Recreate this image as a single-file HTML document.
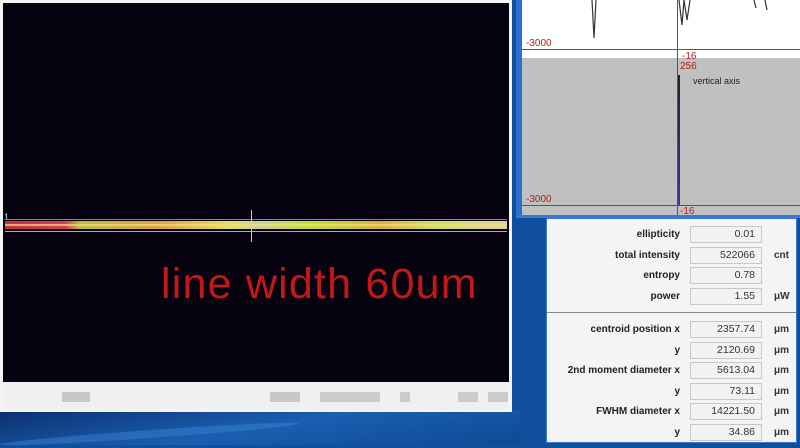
<!DOCTYPE html>
<html><head><meta charset="utf-8"><style>
*{margin:0;padding:0;box-sizing:border-box}
body{width:800px;height:445px;overflow:hidden;position:relative;background:#0f4f9c;font-family:"Liberation Sans",sans-serif}
.abs{position:absolute}
.lbl{position:absolute;right:116px;font-size:10px;font-weight:bold;color:#222;text-align:right;white-space:nowrap}
.box{position:absolute;left:143px;width:72px;height:17px;background:#f2f2f2;border:1px solid #c8c8c8;font-size:10.5px;color:#333;text-align:right;padding-right:6px;line-height:15px}
.u{position:absolute;left:227px;font-size:10px;font-weight:bold;color:#333}
.rt{color:#b02020;font-size:10px;position:absolute}
</style></head><body>
<div class="abs" style="left:0;top:410px;width:520px;height:35px;background:linear-gradient(170deg,#0b2f6e 0%,#1a5fb0 50%,#0e4a95 100%)"></div>
<div class="abs" style="left:0;top:430px;width:300px;height:8px;background:#3b7fd0;opacity:.5;border-radius:50%;transform:rotate(-4deg)"></div>
<div class="abs" style="left:0;top:0;width:512px;height:412px;background:#f4f4f4"></div>
<div class="abs" style="left:3px;top:3px;width:506px;height:379px;background:#06020f"></div>
<div class="abs" style="left:3px;top:382px;width:506px;height:28px;background:#f0f0f0"></div>
<div class="abs" style="left:62px;top:392px;width:28px;height:10px;background:#c8c8c8"></div>
<div class="abs" style="left:270px;top:392px;width:30px;height:10px;background:#c8c8c8"></div>
<div class="abs" style="left:320px;top:392px;width:60px;height:10px;background:#ccc"></div>
<div class="abs" style="left:400px;top:392px;width:10px;height:10px;background:#ccc"></div>
<div class="abs" style="left:458px;top:392px;width:20px;height:10px;background:#ccc"></div>
<div class="abs" style="left:488px;top:392px;width:20px;height:10px;background:#ccc"></div>
<div class="abs" style="left:4px;top:212px;color:#ddd;font-size:9px">1</div>
<div class="abs" style="left:5px;top:219px;width:502px;height:1px;background:#888"></div>
<div class="abs" style="left:5px;top:221px;width:502px;height:8px;background:linear-gradient(90deg,#c03040 0%,#d04050 12%,#c0c040 15%,#e0a040 30%,#e8e060 45%,#d0d0a0 50%,#c0e040 60%,#e0b040 75%,#d0e060 85%,#e0d0a0 100%)"></div>
<div class="abs" style="left:5px;top:224px;width:502px;height:2px;background:#f0e080;opacity:.7"></div>
<div class="abs" style="left:5px;top:231px;width:502px;height:1px;background:#aaa"></div>
<div class="abs" style="left:251px;top:210px;width:1px;height:32px;background:#ccc"></div>
<div class="abs" style="left:161px;top:259px;color:#c41818;font-size:43px;letter-spacing:1.2px;white-space:nowrap;line-height:50px">line width 60um</div>
<div class="abs" style="left:516px;top:0;width:6px;height:216px;background:#2d6fd0"></div>
<div class="abs" style="left:522px;top:0;width:278px;height:58px;background:#fff"></div>
<div class="abs" style="left:522px;top:58px;width:278px;height:158px;background:#c0c0c0"></div>
<div class="abs" style="left:522px;top:49px;width:278px;height:1px;background:#b03030"></div>
<div class="abs" style="left:522px;top:205px;width:278px;height:1px;background:#b03030"></div>
<div class="abs" style="left:677px;top:0;width:1px;height:216px;background:#b03030"></div>
<div class="abs" style="left:678px;top:75px;width:2px;height:130px;background:linear-gradient(#222,#4030a0)"></div>
<svg class="abs" style="left:522px;top:0" width="278" height="60"><path d="M70 0 L72 38 L74 0 M157 0 L160 25 L162 0 L165 20 L168 0 M232 0 L234 8 M243 0 L245 10" stroke="#333" fill="none" stroke-width="1.2"/></svg>
<div class="rt" style="left:526px;top:38px">-3000</div>
<div class="rt" style="left:682px;top:51px">-16</div>
<div class="rt" style="left:680px;top:61px">256</div>
<div class="abs" style="left:693px;top:76px;font-size:9px;color:#222">vertical axis</div>
<div class="rt" style="left:526px;top:194px">-3000</div>
<div class="rt" style="left:680px;top:206px">-16</div>
<div class="abs" style="left:516px;top:215px;width:284px;height:3px;background:#3a78d8"></div>
<div class="abs" style="left:546px;top:218px;width:251px;height:225px;background:#f4f4f4;border:1px solid #3a78d8">
<div class="lbl" style="top:10px">ellipticity</div><div class="box" style="top:7px">0.01</div>
<div class="lbl" style="top:31px">total intensity</div><div class="box" style="top:28px">522066</div><div class="u" style="top:31px">cnt</div>
<div class="lbl" style="top:51px">entropy</div><div class="box" style="top:48px">0.78</div>
<div class="lbl" style="top:72px">power</div><div class="box" style="top:69px">1.55</div><div class="u" style="top:72px">μW</div>
<div class="abs" style="left:0;top:93px;width:249px;height:1px;background:#888"></div>
<div class="lbl" style="top:105px">centroid position x</div><div class="box" style="top:102px">2357.74</div><div class="u" style="top:105px">μm</div>
<div class="lbl" style="top:126px">y</div><div class="box" style="top:123px">2120.69</div><div class="u" style="top:126px">μm</div>
<div class="lbl" style="top:146px">2nd moment diameter x</div><div class="box" style="top:143px">5613.04</div><div class="u" style="top:146px">μm</div>
<div class="lbl" style="top:167px">y</div><div class="box" style="top:164px">73.11</div><div class="u" style="top:167px">μm</div>
<div class="lbl" style="top:187px">FWHM diameter x</div><div class="box" style="top:184px">14221.50</div><div class="u" style="top:187px">μm</div>
<div class="lbl" style="top:208px">y</div><div class="box" style="top:205px">34.86</div><div class="u" style="top:208px">μm</div>
</div>
</body></html>
